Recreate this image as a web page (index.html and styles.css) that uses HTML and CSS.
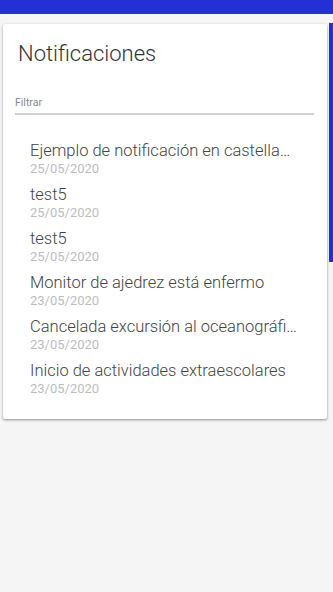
FILE: index.html
```html
<!DOCTYPE html>
<html lang="es">
<head>
<meta charset="utf-8">
<title>Notificaciones</title>
<link rel="stylesheet" href="styles.css">
</head>
<body>
<header class="topbar"></header>
<main class="content">
  <section class="card">
    <h1 class="card-title">Notificaciones</h1>
    <div class="field">
      <label class="field-label">Filtrar</label>
      <div class="field-line"></div>
    </div>
    <ul class="list">
      <li class="item"><span class="item-title">Ejemplo de notificación en castellano para probar</span><span class="item-date">25/05/2020</span></li>
      <li class="item"><span class="item-title">test5</span><span class="item-date">25/05/2020</span></li>
      <li class="item"><span class="item-title">test5</span><span class="item-date">25/05/2020</span></li>
      <li class="item"><span class="item-title">Monitor de ajedrez está enfermo</span><span class="item-date">23/05/2020</span></li>
      <li class="item"><span class="item-title">Cancelada excursión al oceanográfico de Valencia</span><span class="item-date">23/05/2020</span></li>
      <li class="item"><span class="item-title">Inicio de actividades extraescolares</span><span class="item-date">23/05/2020</span></li>
    </ul>
  </section>
  <div class="scroll-thumb"></div>
</main>
</body>
</html>
```
FILE: styles.css
```css
html, body {
  margin: 0;
  padding: 0;
}
body {
  width: 333px;
  height: 592px;
  overflow: hidden;
  background: #f5f5f5;
  font-family: Roboto, "Liberation Sans", sans-serif;
}
.topbar {
  height: 14px;
  background: #2330d6;
}
.content {
  position: relative;
  padding: 10px 0 0 3px;
}
.card {
  width: 324px;
  box-sizing: border-box;
  background: #fff;
  padding: 16px 13px 18px 12px;
  border-radius: 2px;
  box-shadow: 0 1px 3px rgba(0,0,0,0.3), 0 1px 2px rgba(0,0,0,0.15);
}
.card-title {
  margin: 0 0 0 3px;
  font-size: 22px;
  font-weight: 300;
  line-height: 28px;
  color: #333;
}
.field {
  margin-top: 28px;
}
.field-label {
  display: block;
  font-size: 10.5px;
  line-height: 14px;
  color: #8a8a8a;
}
.field-line {
  margin-top: 3px;
  height: 2px;
  background: #d0d0d0;
}
.list {
  list-style: none;
  margin: 22px 0 0 0;
  padding: 0 0 0 15px;
}
.item {
  display: flex;
  flex-direction: column;
  padding: 4px 0;
}
.item-title {
  font-size: 16.5px;
  font-weight: 300;
  line-height: 20px;
  color: #444;
  white-space: nowrap;
  overflow: hidden;
  text-overflow: ellipsis;
  max-width: 268px;
}
.item-date {
  font-size: 13px;
  line-height: 16px;
  color: #bdbdbd;
}
.scroll-thumb {
  position: absolute;
  top: 9px;
  right: 0;
  width: 4px;
  height: 239px;
  background: #2330d6;
}
```
